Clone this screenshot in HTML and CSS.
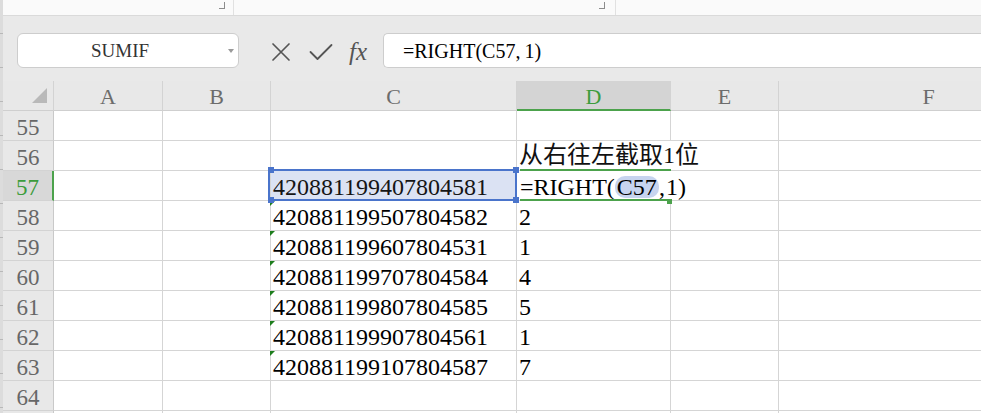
FILE: index.html
```html
<!DOCTYPE html>
<html lang="zh-CN">
<head>
<meta charset="utf-8">
<title>WPS 表格 - RIGHT</title>
<link rel="stylesheet" href="styles.css">
</head>
<body>
<div class="window">
  <div class="edge"></div>
  <div class="app">
    <div class="topbar">
      <div class="seg seg1"><span class="grip"></span></div>
      <div class="seg seg2"><span class="grip"></span></div>
      <div class="seg seg3"></div>
    </div>
    <div class="fxbar">
      <div class="namebox"><span class="name">SUMIF</span><span class="caret"></span></div>
      <svg class="ico-x" viewBox="0 0 20 20" width="20" height="20"><path d="M2 2 L18 18 M18 2 L2 18" stroke="#555" stroke-width="1.7" fill="none" stroke-linecap="round"/></svg>
      <svg class="ico-ok" viewBox="0 0 24 20" width="24" height="20"><path d="M1.5 10 L8.5 17 L22.5 3" stroke="#555" stroke-width="1.8" fill="none" stroke-linecap="round" stroke-linejoin="round"/></svg>
      <span class="fx">fx</span>
      <div class="formula">=RIGHT(C57,<span class="cm"></span>1)</div>
    </div>
    <div class="sheet">
      <div class="cell hd corner"><svg viewBox="0 0 51 30" width="51" height="30"><polygon points="44,7 44,22 29,22" fill="#b9b9b9"/></svg></div>
      <div class="cell hd">A</div>
      <div class="cell hd">B</div>
      <div class="cell hd">C</div>
      <div class="cell hd act">D</div>
      <div class="cell hd">E</div>
      <div class="cell hd">F</div>

      <div class="cell rh">55</div><div class="cell"></div><div class="cell"></div><div class="cell"></div><div class="cell"></div><div class="cell"></div><div class="cell"></div>

      <div class="cell rh">56</div><div class="cell"></div><div class="cell"></div><div class="cell"></div><div class="cell over cjk">从右往左截取1位</div><div class="cell"></div><div class="cell"></div>

      <div class="cell rh act">57</div><div class="cell"></div><div class="cell"></div>
      <div class="cell sel">420881199407804581<span class="selbox"></span><span class="hdl tl"></span><span class="hdl tr"></span><span class="hdl bl"></span><span class="hdl br"></span></div>
      <div class="cell over edit">=RIGHT(<span class="ref">C57</span>,<span class="cm2"></span>1)<span class="editbox"></span><span class="fill"></span></div>
      <div class="cell"></div><div class="cell"></div>

      <div class="cell rh">58</div><div class="cell"></div><div class="cell"></div><div class="cell warn">420881199507804582</div><div class="cell">2</div><div class="cell"></div><div class="cell"></div>
      <div class="cell rh">59</div><div class="cell"></div><div class="cell"></div><div class="cell warn">420881199607804531</div><div class="cell">1</div><div class="cell"></div><div class="cell"></div>
      <div class="cell rh">60</div><div class="cell"></div><div class="cell"></div><div class="cell warn">420881199707804584</div><div class="cell">4</div><div class="cell"></div><div class="cell"></div>
      <div class="cell rh">61</div><div class="cell"></div><div class="cell"></div><div class="cell warn">420881199807804585</div><div class="cell">5</div><div class="cell"></div><div class="cell"></div>
      <div class="cell rh">62</div><div class="cell"></div><div class="cell"></div><div class="cell warn">420881199907804561</div><div class="cell">1</div><div class="cell"></div><div class="cell"></div>
      <div class="cell rh">63</div><div class="cell"></div><div class="cell"></div><div class="cell warn">420881199107804587</div><div class="cell">7</div><div class="cell"></div><div class="cell"></div>
      <div class="cell rh">64</div><div class="cell"></div><div class="cell"></div><div class="cell"></div><div class="cell"></div><div class="cell"></div><div class="cell"></div>
      <div class="cell rh"></div><div class="cell"></div><div class="cell"></div><div class="cell"></div><div class="cell"></div><div class="cell"></div><div class="cell"></div>
    </div>
  </div>
</div>
</body>
</html>
```
FILE: styles.css
```css
html, body {
  margin: 0;
  padding: 0;
}
body {
  width: 981px;
  height: 413px;
  overflow: hidden;
  background: #fff;
  font-family: "Liberation Serif", "Noto Sans CJK SC", serif;
}
.window {
  display: flex;
  height: 413px;
}
.edge {
  width: 3px;
  flex: none;
  background: repeating-linear-gradient(to bottom, #dcdcdc 0 33px, #b8b8b8 33px 34px);
}
.app {
  flex: 1;
  min-width: 0;
  display: flex;
  flex-direction: column;
  overflow: hidden;
}

/* top band */
.topbar {
  height: 15px;
  flex: none;
  background: #fafafa;
  border-bottom: 1px solid #dadada;
  display: flex;
}
.seg {
  box-sizing: border-box;
  border-right: 1px solid #e1e1e1;
  display: flex;
  justify-content: flex-end;
}
.seg1 { width: 231px; padding-right: 8px; }
.seg2 { width: 382px; padding-right: 10px; }
.seg3 { flex: 1; border-right: none; }
.grip {
  width: 6px;
  height: 7px;
  margin-top: 2px;
  box-sizing: border-box;
  border-right: 1px solid #8c8c8c;
  border-bottom: 1px solid #8c8c8c;
}

/* formula bar */
.fxbar {
  height: 65px;
  flex: none;
  box-sizing: border-box;
  background: #e9e9e9;
  display: flex;
  align-items: flex-start;
  padding: 17px 0 0 14px;
}
.namebox {
  width: 222px;
  height: 35px;
  flex: none;
  box-sizing: border-box;
  background: #fff;
  border: 1px solid #cdcdcd;
  border-radius: 6px;
  display: flex;
  align-items: center;
}
.name {
  width: 204px;
  text-align: center;
  font-size: 19px;
  color: #333;
  padding-top: 1px;
}
.caret {
  width: 0;
  height: 0;
  border-left: 3.5px solid transparent;
  border-right: 3.5px solid transparent;
  border-top: 4px solid #9a9a9a;
  margin-left: 6px;
}
.ico-x {
  flex: none;
  display: block;
  margin: 9px 0 0 32px;
}
.ico-ok {
  flex: none;
  display: block;
  margin: 9px 0 0 18px;
}
.fx {
  flex: none;
  width: 24px;
  margin: 6px 0 0 16px;
  font-style: italic;
  font-size: 25px;
  line-height: 26px;
  color: #555;
}
.formula {
  flex: 1;
  margin-left: 10px;
  height: 35px;
  box-sizing: border-box;
  background: #fff;
  border: 1px solid #cdcdcd;
  border-right: none;
  border-radius: 5px 0 0 5px;
  padding-left: 19px;
  font-size: 20px;
  line-height: 34px;
  color: #000;
  white-space: nowrap;
}
.cm { display: inline-block; width: 4px; }

/* sheet grid */
.sheet {
  display: grid;
  grid-template-columns: 51px 109px 108px 246px 154px 108px 300px;
  grid-auto-rows: 30px;
  background: #fff;
}
.cell {
  box-sizing: border-box;
  border-right: 1px solid #d5d5d5;
  border-bottom: 1px solid #d5d5d5;
  font-size: 24px;
  line-height: 28px;
  padding: 2px 0 0 2px;
  white-space: nowrap;
  color: #000;
}
.hd {
  background: #e8e8e8;
  border-right-color: #d3d3d3;
  border-bottom-color: #cfcfcf;
  text-align: center;
  color: #6c6c6c;
  font-size: 22px;
  line-height: 28px;
  padding: 2px 0 0 0;
}
.hd.corner { padding: 0; }
.hd.corner svg { display: block; }
.hd.act {
  background: #d4d4d4;
  color: #3c9c3c;
  border-bottom: 2px solid #4ca24c;
}
.rh {
  background: #e8e8e8;
  border-right-color: #c9c9c9;
  border-bottom-color: #d3d3d3;
  text-align: center;
  color: #676767;
  font-size: 23px;
  padding: 3px 0 0 0;
}
.rh.act {
  background: #d8d8d8;
  color: #3c9c3c;
  border-right: 2px solid #4ca24c;
}
.over {
  border-right-color: transparent;
  overflow: visible;
}
.cjk {
  padding-top: 0;
  color: #111;
}

/* selected cell C57 */
.sel {
  position: relative;
  z-index: 2;
  background: #dbe2f3;
  color: #151515;
}
.selbox {
  position: absolute;
  left: -3px;
  top: -2px;
  width: 249px;
  height: 32px;
  box-sizing: border-box;
  border: 2px solid #4a74cb;
}
.hdl {
  position: absolute;
  width: 6px;
  height: 6px;
  background: #4a74cb;
}
.hdl.tl { left: -3px; top: -4px; }
.hdl.tr { left: 242px; top: -4px; }
.hdl.bl { left: -3px; top: 26px; }
.hdl.br { left: 242px; top: 26px; }

/* editing cell D57 */
.edit {
  position: relative;
  z-index: 1;
  padding-left: 3px;
}
.ref {
  display: inline-block;
  background: #c7d4ef;
  border-radius: 10px;
  padding: 0 2px;
  margin-left: 0;
  line-height: 22px;
}
.cm2 { display: inline-block; width: 1px; }
.editbox {
  position: absolute;
  left: 3px;
  top: -2px;
  width: 151px;
  height: 32px;
  box-sizing: border-box;
  border-top: 2px solid #4ca24c;
  border-bottom: 2px solid #4ca24c;
}
.fill {
  position: absolute;
  left: 150px;
  top: 28px;
  width: 5px;
  height: 5px;
  background: #4ca24c;
}

/* error indicator triangles */
.warn { position: relative; }
.warn::before {
  content: "";
  position: absolute;
  left: -1px;
  top: 0;
  width: 0;
  height: 0;
  border-top: 5px solid #1e7e1e;
  border-right: 5px solid transparent;
}
```
